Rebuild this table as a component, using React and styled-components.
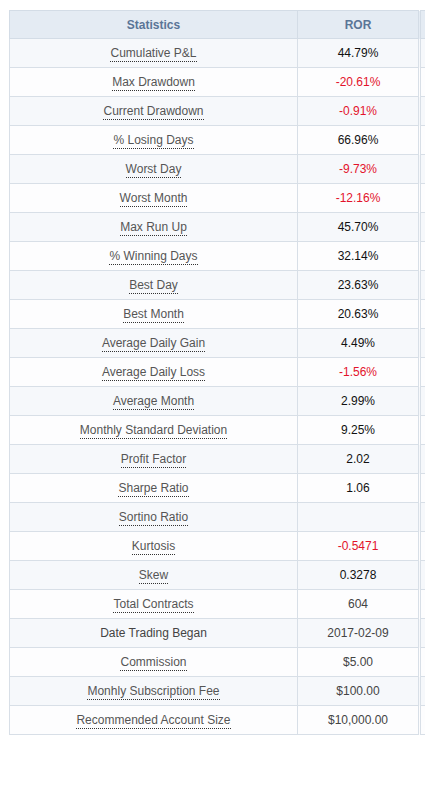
import React from 'react';
import styled, { createGlobalStyle } from 'styled-components';

const GlobalStyle = createGlobalStyle`
  body {
    margin: 0;
    background: #fff;
    font-family: "Liberation Sans", Arial, sans-serif;
    overflow: hidden;
  }
`;

const rows = [
  ['Cumulative P&L', '44.79%', 'pos'],
  ['Max Drawdown', '-20.61%', 'neg'],
  ['Current Drawdown', '-0.91%', 'neg'],
  ['% Losing Days', '66.96%', 'pos'],
  ['Worst Day', '-9.73%', 'neg'],
  ['Worst Month', '-12.16%', 'neg'],
  ['Max Run Up', '45.70%', 'pos'],
  ['% Winning Days', '32.14%', 'pos'],
  ['Best Day', '23.63%', 'pos'],
  ['Best Month', '20.63%', 'pos'],
  ['Average Daily Gain', '4.49%', 'pos'],
  ['Average Daily Loss', '-1.56%', 'neg'],
  ['Average Month', '2.99%', 'pos'],
  ['Monthly Standard Deviation', '9.25%', 'pos'],
  ['Profit Factor', '2.02', 'pos'],
  ['Sharpe Ratio', '1.06', 'pos'],
  ['Sortino Ratio', '', 'pos'],
  ['Kurtosis', '-0.5471', 'neg'],
  ['Skew', '0.3278', 'pos'],
  ['Total Contracts', '604', 'plain'],
  ['Date Trading Began', '2017-02-09', 'plain', true],
  ['Commission', '$5.00', 'plain'],
  ['Monhly Subscription Fee', '$100.00', 'plain'],
  ['Recommended Account Size', '$10,000.00', 'plain'],
];

// the table is wider than the window; the frame clips it
const Page = styled.div`
  padding: 10px 0 0 9px;
  width: 416px;
  overflow: hidden;
`;

const Table = styled.table`
  border-collapse: collapse;
  font-size: 12px;
  table-layout: fixed;
  width: 528px;
`;

const HeadCell = styled.th`
  height: 27px;
  padding: 0;
  background: #e4ebf3;
  color: #5a7597;
  font-weight: bold;
  text-align: center;
  border: 1px solid #d3dce6;
  width: ${(p) => p.$w}px;
`;

const HeadGap = styled.th`
  padding: 0;
  background: #e4ebf3;
  border: 1px solid #d3dce6;
  border-left: 3px double #d3dce6;
`;

const Row = styled.tr`
  background: ${(p) => (p.$odd ? '#f6f8fb' : '#fdfdfe')};
`;

const Cell = styled.td`
  height: 28px;
  padding: 0;
  text-align: center;
  border: 1px solid #d8dfe7;
  color: ${(p) => (p.$tone === 'neg' ? '#e3132b' : p.$tone === 'plain' ? '#444' : '#111')};
`;

const Gap = styled.td`
  padding: 0;
  border: 1px solid #d8dfe7;
  border-left: 3px double #d8dfe7;
`;

const Label = styled.span`
  color: ${(p) => (p.$plain ? '#444' : '#555')};
  border-bottom: ${(p) => (p.$plain ? 'none' : '1px dotted #333')};
  padding-bottom: 1px;
`;

export default function App() {
  return (
    <Page>
      <GlobalStyle />
      <Table>
        <thead>
          <tr>
            <HeadCell $w={287}>Statistics</HeadCell>
            <HeadCell $w={120}>ROR</HeadCell>
            <HeadGap />
          </tr>
        </thead>
        <tbody>
          {rows.map(([label, value, tone, plain], i) => (
            <Row key={label} $odd={i % 2 === 0}>
              <Cell>
                <Label $plain={plain}>{label}</Label>
              </Cell>
              <Cell $tone={tone}>{value}</Cell>
              <Gap />
            </Row>
          ))}
        </tbody>
      </Table>
    </Page>
  );
}
